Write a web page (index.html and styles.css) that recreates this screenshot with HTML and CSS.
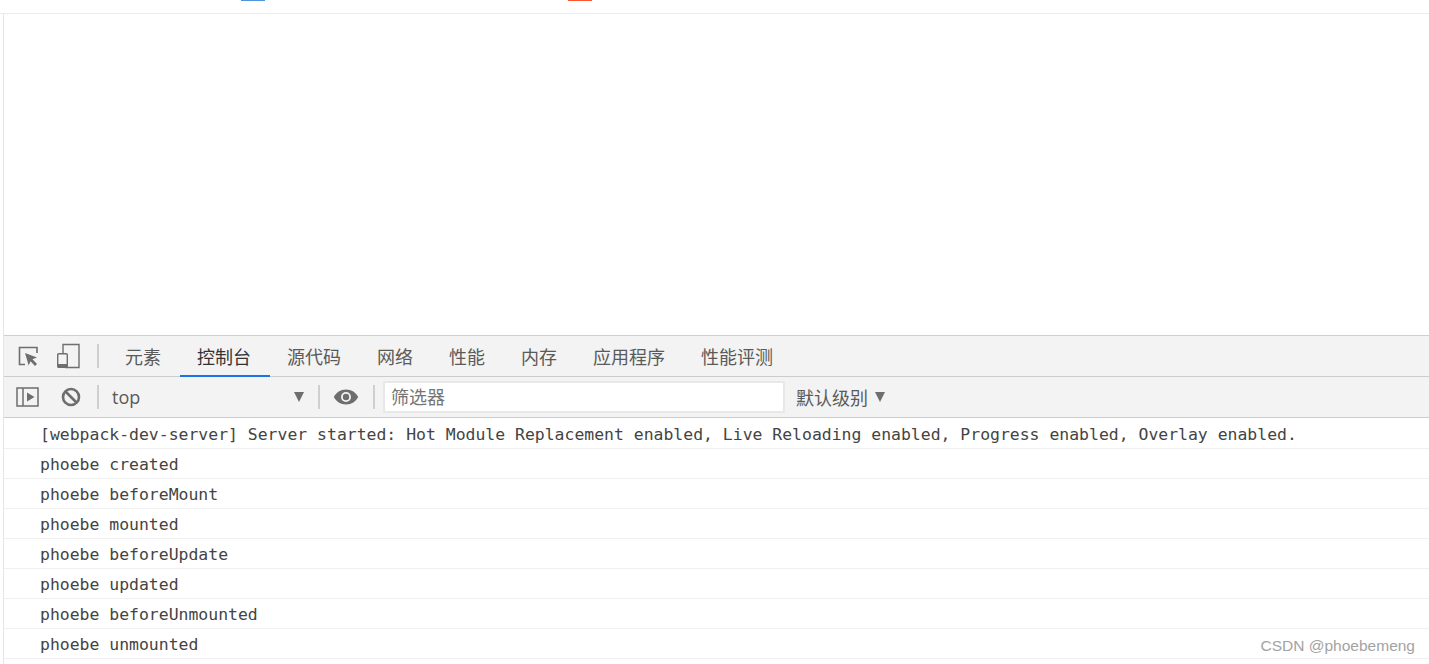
FILE: index.html
```html
<!DOCTYPE html>
<html lang="zh">
<head>
<meta charset="utf-8">
<title>Console</title>
<link rel="stylesheet" href="styles.css">
</head>
<body>
<header class="topbar">
  <span class="mark mark-blue"></span>
  <span class="mark mark-red"></span>
</header>
<div class="page">
  <div class="viewport"></div>
  <section class="devtools">
    <div class="tabs">
      <button class="tool tool-inspect" aria-label="inspect">
        <svg width="24" height="24" viewBox="0 0 24 24"><path d="M9 20.500H3.500V3.500H21V9" fill="none" stroke="#6e6e6e" stroke-width="1.600"/><path d="M9 9l12 4.500-4.500 1.800 4.500 4.700-2 2-4.500-4.800-1.800 4.300z" fill="#6e6e6e"/></svg>
      </button>
      <button class="tool tool-device" aria-label="device">
        <svg width="24" height="26" viewBox="0 0 24 26"><path d="M7 10V1.500H23V24.500H9" fill="none" stroke="#6e6e6e" stroke-width="1.400"/><rect x="1.700" y="10.700" width="9.600" height="13.600" rx="1" fill="none" stroke="#6e6e6e" stroke-width="1.400"/><rect x="1.700" y="21" width="9.600" height="3.300" fill="#6e6e6e"/></svg>
      </button>
      <span class="divider divider-tabs"></span>
      <a class="tab">元素</a>
      <a class="tab tab-active">控制台</a>
      <a class="tab">源代码</a>
      <a class="tab">网络</a>
      <a class="tab">性能</a>
      <a class="tab">内存</a>
      <a class="tab">应用程序</a>
      <a class="tab">性能评测</a>
    </div>
    <div class="filters">
      <button class="tool tool-sidebar" aria-label="sidebar">
        <svg width="24" height="20" viewBox="0 0 24 20"><rect x="1" y="1" width="21" height="18" fill="none" stroke="#6e6e6e" stroke-width="1.500"/><path d="M7 1v18" stroke="#6e6e6e" stroke-width="1.500"/><path d="M11 5.500l7.500 4.500-7.500 4.500z" fill="#6e6e6e"/></svg>
      </button>
      <button class="tool tool-clear" aria-label="clear">
        <svg width="20" height="20" viewBox="0 0 20 20"><circle cx="10" cy="10" r="8" fill="none" stroke="#6e6e6e" stroke-width="2.600"/><path d="M4.500 4.500l11 11" stroke="#6e6e6e" stroke-width="2.600"/></svg>
      </button>
      <span class="divider divider-context"></span>
      <div class="context"><span>top</span><i class="caret"></i></div>
      <span class="divider"></span>
      <button class="tool tool-eye" aria-label="eye">
        <svg width="26" height="16" viewBox="0 0 26 16"><path d="M13 0.500C7.500 0.500 3 3.500 0.800 8 3 12.500 7.500 15.500 13 15.500S23 12.500 25.200 8C23 3.500 18.500 0.500 13 0.500z" fill="#6e6e6e"/><circle cx="13" cy="8" r="5" fill="#f3f3f3"/><circle cx="13" cy="8" r="3.200" fill="#6e6e6e"/></svg>
      </button>
      <span class="divider divider-filter"></span>
      <div class="filter-input">筛选器</div>
      <div class="level"><span>默认级别</span><i class="caret"></i></div>
    </div>
    <div class="log">
      <div class="row">[webpack-dev-server] Server started: Hot Module Replacement enabled, Live Reloading enabled, Progress enabled, Overlay enabled.</div>
      <div class="row">phoebe created</div>
      <div class="row">phoebe beforeMount</div>
      <div class="row">phoebe mounted</div>
      <div class="row">phoebe beforeUpdate</div>
      <div class="row">phoebe updated</div>
      <div class="row">phoebe beforeUnmounted</div>
      <div class="row">phoebe unmounted</div>
    </div>
    <div class="watermark">CSDN @phoebemeng</div>
  </section>
</div>
</body>
</html>
```
FILE: styles.css
```css
* { box-sizing: border-box; }
html, body { margin: 0; height: 664px; overflow: hidden; background: #fff; }
body { font-family: "Noto Sans CJK SC", "Liberation Sans", sans-serif; color: #303942; }
button { border: 0; padding: 0; background: none; display: flex; align-items: center; }

.topbar { height: 14px; border-bottom: 1px solid #ececec; display: flex; align-items: flex-start; padding-left: 241px; gap: 303px; }
.mark { width: 24px; height: 1px; }
.mark-blue { background: #4f94d8; }
.mark-red { background: #fc5531; }

.page { height: 650px; margin-left: 3px; border-left: 1px solid #e6e6e6; display: flex; flex-direction: column; }
.viewport { height: 321px; flex: none; }
.devtools { position: relative; flex: 1; border-top: 1px solid #cfcfcf; }

.tabs { height: 41px; background: #f3f3f3; border-bottom: 1px solid #cccccc; display: flex; align-items: stretch; padding-left: 12px; }
.tool-inspect { margin-right: 16px; }
.tool-device { margin-right: 17px; }
.divider { width: 2px; height: 24px; background: #cfcfcf; flex: none; align-self: center; }
.divider-tabs { margin-right: 8px; }
.tab { padding: 0 18px; font-size: 18px; line-height: 40px; color: #5a5a5a; white-space: nowrap; }
.tab-active { color: #333; border-bottom: 2px solid #1a73e8; height: 41px; margin: 0 -1px -1px 1px; padding: 0 19px 0 17px; }

.filters { height: 41px; background: #f3f3f3; border-bottom: 1px solid #cccccc; display: flex; align-items: center; padding-left: 12px; }
.tool-sidebar { margin-right: 21px; }
.tool-clear { margin-right: 16px; }
.divider-context { margin-right: 13px; }
.context { width: 193px; display: flex; align-items: center; justify-content: space-between; margin-right: 13px; font-size: 18px; line-height: 24px; color: #5a5a5a; font-family: "Open Sans", sans-serif; }
.context .caret { margin-right: 1px; }
.caret { display: block; width: 0; height: 0; border-left: 5.500px solid transparent; border-right: 5.500px solid transparent; border-top: 10px solid #6e6e6e; }
.tool-eye { margin: 0 14px 0 13px; }
.divider-filter { margin-right: 8px; }
.filter-input { width: 402px; height: 32px; background: #fff; border: 2px solid #e8e8e8; padding-left: 6px; font-size: 18px; line-height: 26px; color: #757575; }
.level { display: flex; align-items: center; gap: 7px; margin-left: 11px; font-size: 18px; line-height: 24px; color: #5a5a5a; }

.row { height: 30px; border-bottom: 1px solid #f0f0f0; padding-left: 36px; font-family: "DejaVu Sans Mono", monospace; font-size: 16.440px; line-height: 31px; color: #444444; white-space: pre; }
.row:first-child { height: 31px; line-height: 34px; }

.watermark { position: absolute; right: 14px; bottom: 9px; font-family: "Liberation Sans", sans-serif; font-size: 15.500px; color: #a3a3a3; }
```
